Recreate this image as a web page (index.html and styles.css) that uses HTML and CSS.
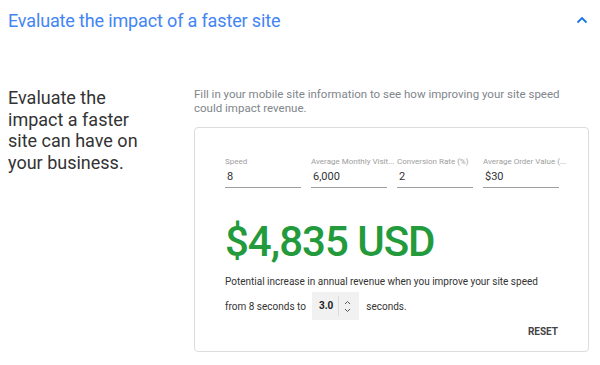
FILE: index.html
```html
<!DOCTYPE html>
<html lang="en">
<head>
  <meta charset="UTF-8" />
  <meta name="viewport" content="width=device-width, initial-scale=1.0"/>
  <title>Evaluate the impact of a faster site</title>
  <link rel="stylesheet" href="styles.css">
</head>
<body>
  <div class="panel-head">
    <h2>Evaluate the impact of a faster site</h2>
    <svg class="chevron" width="12" height="8" viewBox="0 0 12 8">
      <path d="M1.5 6.5 L6 2 L10.5 6.5" fill="none" stroke="#1a73e8" stroke-width="1.8"/>
    </svg>
  </div>

  <div class="panel-body">
    <p class="lead">Evaluate the impact a faster site can have on your business.</p>

    <div class="calc">
      <p class="intro">Fill in your mobile site information to see how improving your site speed could impact revenue.</p>

      <div class="card">
        <div class="fields">
          <label class="field">
            <span class="field-label">Speed</span>
            <span class="field-value">8</span>
          </label>
          <label class="field">
            <span class="field-label">Average Monthly Visit...</span>
            <span class="field-value">6,000</span>
          </label>
          <label class="field">
            <span class="field-label">Conversion Rate (%)</span>
            <span class="field-value">2</span>
          </label>
          <label class="field">
            <span class="field-label">Average Order Value (...</span>
            <span class="field-value">$30</span>
          </label>
        </div>

        <div class="result">$4,835 USD</div>

        <p class="result-note">Potential increase in annual revenue when you improve your site speed</p>
        <div class="speed-row">
          <span>from 8 seconds to</span>
          <div class="stepper">
            <span class="stepper-value">3.0</span>
            <div class="stepper-arrows">
              <svg width="7" height="5" viewBox="0 0 7 5"><path d="M1 4 L3.5 1.5 L6 4" fill="none" stroke="#555" stroke-width="1"/></svg>
              <svg width="7" height="5" viewBox="0 0 7 5"><path d="M1 1 L3.5 3.5 L6 1" fill="none" stroke="#555" stroke-width="1"/></svg>
            </div>
          </div>
          <span>seconds.</span>
        </div>
        <div class="actions">
          <button class="reset">RESET</button>
        </div>
      </div>
    </div>
  </div>
</body>
</html>
```

FILE: styles.css
```css
body {
  margin: 0;
  padding: 0 8px;
  font-family: Roboto, "Liberation Sans", sans-serif;
  background: #fff;
  color: #333;
}
.panel-head {
  display: flex;
  align-items: center;
  justify-content: space-between;
  height: 40px;
  padding-right: 4px;
}
.panel-head h2 {
  margin: 0;
  font-size: 18px;
  font-weight: 400;
  color: #4285f4;
  letter-spacing: -0.15px;
}
.chevron {
  margin-top: -1px;
}
.panel-body {
  display: flex;
  padding-top: 47px;
}
.lead {
  width: 150px;
  margin: 0 36px 0 0;
  font-size: 18px;
  line-height: 21.5px;
  color: #333;
}
.calc {
  width: 395px;
}
.intro {
  margin: 0 0 12px;
  font-size: 11.5px;
  line-height: 14px;
  color: #80868b;
}
.card {
  border: 1px solid #dadce0;
  border-radius: 4px;
  padding: 29px 30px 14px;
}
.fields {
  display: grid;
  grid-template-columns: repeat(4, 76px);
  gap: 10px;
}
.field {
  display: flex;
  flex-direction: column;
  border-bottom: 1px solid #9e9e9e;
}
.field-label {
  font-size: 8px;
  color: #9e9e9e;
  white-space: nowrap;
  line-height: 10px;
}
.field-value {
  font-size: 11px;
  color: #333;
  padding: 3px 0 4px 2px;
  line-height: 13px;
}
.result {
  margin-top: 29px;
  font-size: 42px;
  font-weight: 500;
  line-height: 50px;
  color: #239a3b;
  letter-spacing: -1px;
}
.result-note {
  margin: 9px 0 0;
  font-size: 10px;
  color: #333;
}
.speed-row {
  display: flex;
  align-items: center;
  gap: 6px;
  margin-top: 5px;
  font-size: 10px;
}
.stepper {
  display: flex;
  align-items: center;
  background: #f1f1f1;
  height: 28px;
  padding: 0 8px 0 7px;
  margin-right: 1px;
}
.stepper-value {
  font-weight: 700;
  font-size: 10px;
  color: #222;
  padding-right: 5px;
  border-right: 1px solid #ddd;
  line-height: 20px;
}
.stepper-arrows {
  display: flex;
  flex-direction: column;
  gap: 3px;
  padding-left: 5px;
}
.stepper-arrows svg {
  display: block;
}
.actions {
  display: flex;
  justify-content: flex-end;
  margin-top: 6px;
}
.reset {
  border: none;
  background: none;
  padding: 0;
  font-family: inherit;
  font-size: 10px;
  font-weight: 700;
  color: #444;
}
```
